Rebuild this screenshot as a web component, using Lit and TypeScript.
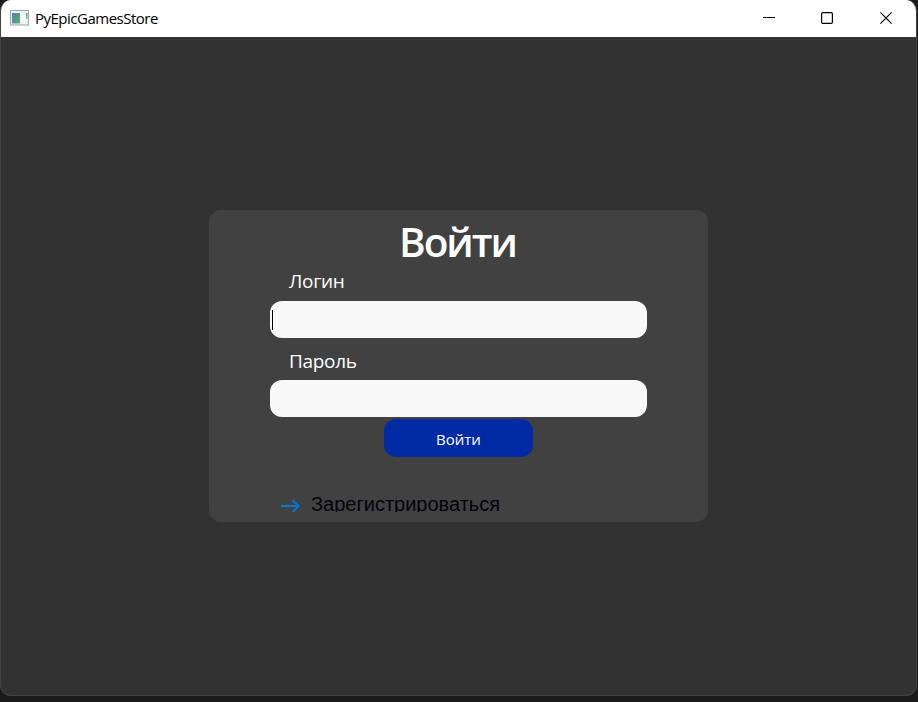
import { LitElement, html, css } from "lit";
import { customElement } from "lit/decorators.js";

@customElement("title-bar")
class TitleBar extends LitElement {
  static styles = css`
    :host { display: flex; align-items: flex-start; height: 37px; background: #fff; color: #000;
      font-family: "Open Sans", "Noto Sans", sans-serif; }
    .app-icon { display: block; margin: 10px 6px 0 9px; }
    .caption { flex: 1; font-size: 15px; line-height: 20px; margin-top: 8px; letter-spacing: -0.5px; white-space: nowrap; }
    .controls { display: flex; margin-right: 1px; }
    .control { width: 58.5px; height: 36px; display: grid; place-items: center; }
    svg { display: block; }
  `;
  render() {
    return html`
      <svg class="app-icon" width="19" height="16" viewBox="0 0 19 16">
        <defs>
          <linearGradient id="g" x1="0" y1="0" x2="1" y2="1">
            <stop offset="0" stop-color="#4a86a8" /><stop offset="1" stop-color="#5fae7c" />
          </linearGradient>
          <linearGradient id="h" x1="0" y1="0" x2="0" y2="1">
            <stop offset="0" stop-color="#5f9fc0" /><stop offset="1" stop-color="#7fc58c" />
          </linearGradient>
        </defs>
        <rect x=".5" y=".5" width="18" height="14.5" fill="#eef0f2" stroke="#9ba3ab" />
        <rect x="2" y="3" width="8" height="10.5" fill="url(#g)" />
        <rect x="11" y="3" width="6.5" height="10.5" fill="#f3f5f6" />
        <rect x="16" y="3" width="1.5" height="6" fill="url(#h)" />
      </svg>
      <div class="caption">PyEpicGamesStore</div>
      <div class="controls">
        <div class="control"><svg width="12" height="12"><path d="M0 5.5H12" stroke="#000" /></svg></div>
        <div class="control"><svg width="12" height="12"><rect x=".6" y=".6" width="10.8" height="10.8" rx="1.2" fill="none" stroke="#000" stroke-width="1.2" /></svg></div>
        <div class="control"><svg width="12" height="12"><path d="M.4.4L11.6 11.6M11.6.4L.4 11.6" stroke="#000" stroke-width="1.15" /></svg></div>
      </div>
    `;
  }
}

@customElement("login-card")
class LoginCard extends LitElement {
  static styles = css`
    :host { display: flex; flex-direction: column; box-sizing: border-box; width: 499px; height: 312px;
      padding: 4px 61px 10px; border-radius: 12px; background: #414141; color: #fff;
      font-family: "Open Sans", "Noto Sans", sans-serif; }
    .heading { margin: 0; width: 375px; height: 55px; line-height: 55px; font-size: 40.5px; font-weight: 600; text-align: center; letter-spacing: -2px; }
    .label { display: block; padding-left: 19px; font-size: 19px; letter-spacing: -0.3px; }
    .login { height: 32px; line-height: 25px; }
    .password { height: 27px; line-height: 28px; margin-top: 9px; margin-bottom: 6px; }
    .field { box-sizing: border-box; width: 377px; height: 37px; flex: none; border-radius: 12px; background: #f8f8f8;
      display: flex; align-items: center; padding-left: 2px; }
    .caret { width: 1px; height: 20px; background: #000; }
    .submit { align-self: flex-start; flex: none; width: 149px; height: 38px; margin: 2px 0 0 114px; padding: 0; border: 0; border-radius: 12px;
      background: #002ba5; color: #fff; font: 15px/40px "Open Sans", "Noto Sans", sans-serif; text-align: center; }
    .register { display: flex; align-items: flex-start; height: 20px; margin-top: auto; padding-left: 11px; overflow: hidden;
      color: #03030d; font: 20px/25px "Liberation Sans", Arial, sans-serif; white-space: nowrap; }
    .arrow { flex: none; margin: 7px 10px 0 0; }
  `;
  render() {
    return html`
      <h1 class="heading">Войти</h1>
      <label class="label login">Логин</label>
      <div class="field"><span class="caret"></span></div>
      <label class="label password">Пароль</label>
      <div class="field"></div>
      <button class="submit">Войти</button>
      <div class="register">
        <svg class="arrow" width="20" height="14"><path d="M0 7H18M11.5 1L17.7 7L11.5 13" fill="none" stroke="#0078d4" stroke-width="1.9" /></svg>
        <span class="register-text">Зарегистрироваться</span>
      </div>
    `;
  }
}

@customElement("app-root")
class AppRoot extends LitElement {
  static styles = css`
    :host { display: block; box-sizing: border-box; width: 918px; height: 702px; padding-right: 1px; overflow: hidden; background: #1b1b1b; }
    .window { box-sizing: border-box; height: 696px; display: flex; flex-direction: column; overflow: hidden;
      border: 1px solid #434343; border-top: 0; border-radius: 11px; background: #323232; }
    .content { flex: 1; padding: 173px 0 0 208px; }
  `;
  render() {
    return html`
      <div class="window">
        <title-bar></title-bar>
        <div class="content"><login-card></login-card></div>
      </div>
    `;
  }
}
